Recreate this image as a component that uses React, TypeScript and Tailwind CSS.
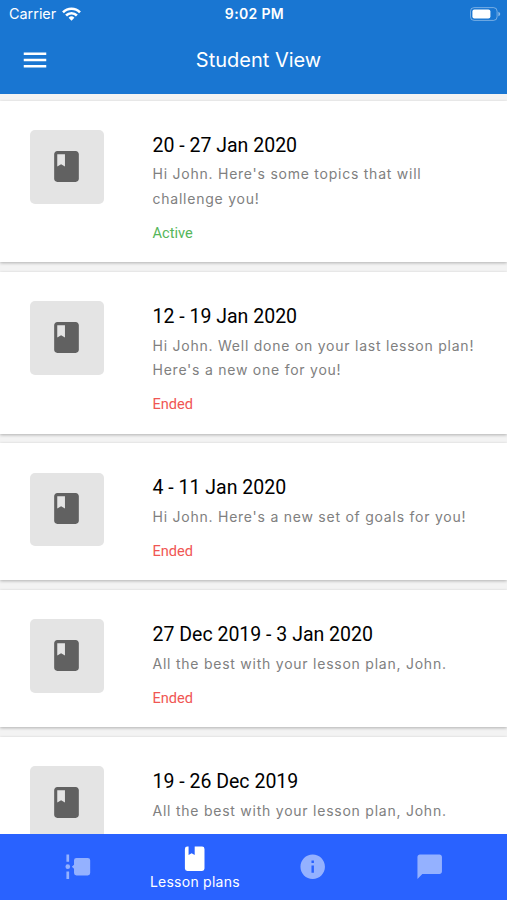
import { MdChatBubble, MdClass, MdInfo, MdMenu } from 'react-icons/md';

interface LessonPlan {
  title: string;
  message: string;
  status?: 'Active' | 'Ended';
}

const lessonPlans: LessonPlan[] = [
  { title: '20 - 27 Jan 2020', message: "Hi John. Here's some topics that will challenge you!", status: 'Active' },
  { title: '12 - 19 Jan 2020', message: "Hi John. Well done on your last lesson plan! Here's a new one for you!", status: 'Ended' },
  { title: '4 - 11 Jan 2020', message: "Hi John. Here's a new set of goals for you!", status: 'Ended' },
  { title: '27 Dec 2019 - 3 Jan 2020', message: 'All the best with your lesson plan, John.', status: 'Ended' },
  { title: '19 - 26 Dec 2019', message: 'All the best with your lesson plan, John.' },
];

function WifiIcon() {
  return (
    <svg width="19" height="14" viewBox="0 0 19 14" fill="none" stroke="currentColor" strokeWidth="2.6">
      <path d="M1 5.3a12 12 0 0 1 17 0" />
      <path d="M4.1 8.5a7.6 7.6 0 0 1 10.8 0" />
      <path d="M9.5 13.8l-2.9-3a4.1 4.1 0 0 1 5.8 0z" fill="currentColor" stroke="none" />
    </svg>
  );
}

function BatteryIcon() {
  return (
    <svg width="31" height="14" viewBox="0 0 31 14" fill="none">
      <rect x="0.5" y="0.6" width="26.6" height="12.8" rx="3.6" stroke="white" strokeOpacity="0.4" />
      <rect x="2.4" y="2.4" width="18" height="9.2" rx="2" fill="white" />
      <path d="M28.4 4.7c1.1.4 1.8 1.3 1.8 2.3s-.7 1.9-1.8 2.3z" fill="white" fillOpacity="0.5" />
    </svg>
  );
}

function TimelineIcon() {
  return (
    <svg width="29.4" height="29.4" viewBox="0 0 24 24" fill="currentColor">
      <path d="M2.8 2H5v6H2.8zM2.8 16H5v6H2.8z" />
      <circle cx="3.9" cy="12" r="1.9" />
      <path d="M11 4.8h9.2a2 2 0 0 1 2 2v10.4a2 2 0 0 1-2 2H11a2 2 0 0 1-2-2v-3.6L7.2 12 9 10.4V6.8a2 2 0 0 1 2-2z" />
    </svg>
  );
}

function BookIcon() {
  return (
    <svg width="29.4" height="29.4" viewBox="0 0 24 24" fill="currentColor">
      <path d="M18 22a2 2 0 0 0 2-2V4a2 2 0 0 0-2-2h-6v7L9.5 7.5 7 9V2H6a2 2 0 0 0-2 2v16a2 2 0 0 0 2 2h12z" />
    </svg>
  );
}

function Header() {
  return (
    <header className="h-[93.5px] shrink-0 bg-[#1976d2] text-white">
      <div className="grid h-7 grid-cols-3 items-center pl-[8px] pr-[6px]">
        <div className="flex items-center gap-[6px] pl-px">
          <span className="text-[14.4px] leading-7">Carrier</span>
          <WifiIcon />
        </div>
        <span className="text-center text-[14px] font-semibold leading-7 tracking-[0.35px]">9:02 PM</span>
        <div className="flex justify-end">
          <BatteryIcon />
        </div>
      </div>
      <div className="grid h-[64px] grid-cols-[60px_1fr_50px] items-center">
        <button type="button" aria-label="Menu" className="flex pl-5">
          <MdMenu size={30} />
        </button>
        <h1 className="text-center text-[20px] leading-6">Student View</h1>
      </div>
    </header>
  );
}

function LessonPlanCard({ plan }: { plan: LessonPlan }) {
  return (
    <article className="flex shrink-0 items-start bg-white pb-[19.5px] pl-[30px] pr-6 pt-[29.3px] shadow-[0_1px_3px_rgba(0,0,0,0.28)]">
      <div className="flex size-[73.5px] shrink-0 items-center justify-center rounded-[5px] bg-[#e4e4e4] pb-px text-[#616161]">
        <MdClass size={37} />
      </div>
      <div className="ml-[49px] flex-1 pt-[0.7px]">
        <h2 className="font-[Roboto] text-[19.5px] leading-[29.5px] text-black">{plan.title}</h2>
        <p className="mt-[2.2px] text-[14px] leading-[24.5px] tracking-[0.76px] text-[#808080]">{plan.message}</p>
        {plan.status && (
          <p className={`mt-[11.3px] font-[Roboto] text-[14.6px] leading-5 ${plan.status === 'Active' ? 'text-[#55b65a]' : 'text-[#f05653]'}`}>
            {plan.status}
          </p>
        )}
      </div>
    </article>
  );
}

function TabBar() {
  return (
    <nav className="grid h-[66px] shrink-0 grid-cols-4 items-center bg-[#2962ff] px-[19px] text-white">
      <button type="button" aria-label="Timeline" className="flex justify-center opacity-50">
        <TimelineIcon />
      </button>
      <button type="button" className="flex flex-col items-center pt-px">
        <BookIcon />
        <span className="text-[14px] leading-[18px] tracking-[0.25px]">Lesson plans</span>
      </button>
      <button type="button" aria-label="Information" className="flex justify-center pl-px opacity-50">
        <MdInfo size={29.4} />
      </button>
      <button type="button" aria-label="Messages" className="flex justify-center opacity-50">
        <MdChatBubble size={29.4} />
      </button>
    </nav>
  );
}

export default function App() {
  return (
    <div className="flex h-screen flex-col overflow-hidden bg-[#f3f3f3] font-[Inter,sans-serif]">
      <Header />
      <main className="flex min-h-0 flex-1 flex-col gap-[9.8px] overflow-hidden pt-[7.3px]">
        {lessonPlans.map((plan) => (
          <LessonPlanCard key={plan.title} plan={plan} />
        ))}
      </main>
      <TabBar />
    </div>
  );
}
